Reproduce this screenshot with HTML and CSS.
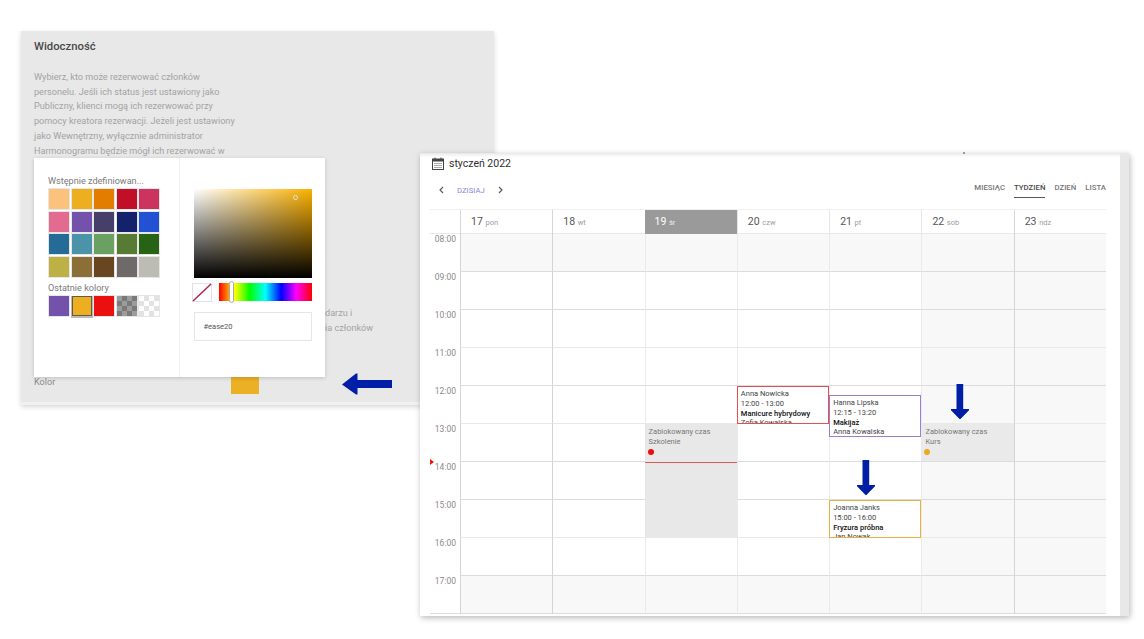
FILE: index.html
```html
<!DOCTYPE html>
<html lang="pl">
<head>
<meta charset="utf-8">
<title>Widoczność i kalendarz</title>
<link rel="stylesheet" href="styles.css">
</head>
<body>
<section class="settings">
  <h2 class="settings-title">Widoczność</h2>
  <p class="settings-text">Wybierz, kto może rezerwować członków<br>personelu. Jeśli ich status jest ustawiony jako<br>Publiczny, klienci mogą ich rezerwować przy<br>pomocy kreatora rezerwacji. Jeżeli jest ustawiony<br>jako Wewnętrzny, wyłącznie administrator<br>Harmonogramu będzie mógł ich rezerwować w</p>
  <p class="settings-tail">darzu i<br>ia członków</p>
  <div class="color-row"><span class="color-label">Kolor</span><span class="color-value"></span></div>
</section>

<div class="picker">
  <div class="picker-left">
    <div class="picker-label">Wstępnie zdefiniowan...</div>
    <div class="swatches">
      <i class="sw s1"></i><i class="sw s2"></i><i class="sw s3"></i><i class="sw s4"></i><i class="sw s5"></i>
      <i class="sw s6"></i><i class="sw s7"></i><i class="sw s8"></i><i class="sw s9"></i><i class="sw s10"></i>
      <i class="sw s11"></i><i class="sw s12"></i><i class="sw s13"></i><i class="sw s14"></i><i class="sw s15"></i>
      <i class="sw s16"></i><i class="sw s17"></i><i class="sw s18"></i><i class="sw s19"></i><i class="sw s20"></i>
    </div>
    <div class="picker-label recent-label">Ostatnie kolory</div>
    <div class="swatches">
      <i class="sw s7"></i><i class="sw s2 selected"></i><i class="sw red"></i><i class="sw check-dark"></i><i class="sw check-light"></i>
    </div>
  </div>
  <div class="picker-right">
    <div class="spectrum"><span class="spectrum-dot"></span></div>
    <div class="hue-row">
      <svg class="no-color" viewBox="0 0 20 19"><rect x="0.5" y="0.5" width="19" height="18" fill="#fff" stroke="#e2e2e2"/><line x1="1" y1="18" x2="19" y2="1" stroke="#a8234f" stroke-width="1.4"/></svg>
      <div class="hue"><span class="hue-thumb"></span></div>
    </div>
    <div class="hex">#ease20</div>
  </div>
</div>

<section class="calendar">
  <div class="cal-title">
    <svg class="cal-icon" viewBox="0 0 12 13"><path d="M3 0.5v2.5M9 0.5v2.5" stroke="#444" fill="none"/><rect x="0.5" y="2" width="11" height="10.5" fill="none" stroke="#444"/><rect x="0.5" y="2" width="11" height="2.5" fill="#444"/><path d="M2.5 6.5h7M2.5 8.5h7M2.5 10.5h7" stroke="#555" stroke-dasharray="1 1" fill="none"/></svg>
    <span>styczeń 2022</span>
  </div>
  <div class="cal-tools">
    <div class="cal-nav">
      <svg class="chev" viewBox="0 0 5 8"><path d="M4 1L1 4l3 3" fill="none" stroke="#555" stroke-width="1.1"/></svg>
      <span class="today-link">DZISIAJ</span>
      <svg class="chev" viewBox="0 0 5 8"><path d="M1 1l3 3-3 3" fill="none" stroke="#555" stroke-width="1.1"/></svg>
    </div>
    <nav class="cal-views">
      <span>MIESIĄC</span><span class="active">TYDZIEŃ</span><span>DZIEŃ</span><span>LISTA</span>
    </nav>
  </div>

  <div class="cal-head">
    <div></div>
    <div class="day dark">17 <small>pon</small></div>
    <div class="day dark">18 <small>wt</small></div>
    <div class="day today">19 <small>śr</small></div>
    <div class="day">20 <small>czw</small></div>
    <div class="day">21 <small>pt</small></div>
    <div class="day">22 <small>sob</small></div>
    <div class="day dark">23 <small>ndz</small></div>
  </div>

  <div class="cal-stack">
    <div class="cal-cells">
      <div class="t">08:00</div><div class="c g dark"></div><div class="c g dark"></div><div class="c g"></div><div class="c g"></div><div class="c g"></div><div class="c g"></div><div class="c g dark"></div>
      <div class="t">09:00</div><div class="c dark"></div><div class="c dark"></div><div class="c"></div><div class="c"></div><div class="c"></div><div class="c g"></div><div class="c g dark"></div>
      <div class="t">10:00</div><div class="c soft dark"></div><div class="c soft dark"></div><div class="c soft"></div><div class="c soft"></div><div class="c soft"></div><div class="c soft g"></div><div class="c soft g dark"></div>
      <div class="t">11:00</div><div class="c dark"></div><div class="c dark"></div><div class="c"></div><div class="c"></div><div class="c"></div><div class="c g"></div><div class="c g dark"></div>
      <div class="t">12:00</div><div class="c soft dark"></div><div class="c soft dark"></div><div class="c soft"></div><div class="c soft"></div><div class="c soft"></div><div class="c soft g"></div><div class="c soft g dark"></div>
      <div class="t">13:00</div><div class="c dark"></div><div class="c dark"></div><div class="c"></div><div class="c"></div><div class="c"></div><div class="c g"></div><div class="c g dark"></div>
      <div class="t">14:00</div><div class="c dark"></div><div class="c dark"></div><div class="c"></div><div class="c"></div><div class="c"></div><div class="c g"></div><div class="c g dark"></div>
      <div class="t">15:00</div><div class="c soft dark"></div><div class="c soft dark"></div><div class="c soft"></div><div class="c soft"></div><div class="c soft"></div><div class="c soft g"></div><div class="c soft g dark"></div>
      <div class="t">16:00</div><div class="c dark"></div><div class="c dark"></div><div class="c"></div><div class="c"></div><div class="c"></div><div class="c g"></div><div class="c g dark"></div>
      <div class="t last">17:00</div><div class="c g dark"></div><div class="c g dark"></div><div class="c g"></div><div class="c g"></div><div class="c g"></div><div class="c g"></div><div class="c g dark"></div>
    </div>
    <div class="cal-events">
      <div class="block block-wed"><div>Zablokowany czas</div><div>Szkolenie</div><span class="dot dot-red"></span></div>
      <div class="block block-sat"><div>Zablokowany czas</div><div>Kurs</div><span class="dot dot-amber"></span></div>
      <div class="now-line"></div>
      <div class="now-mark"></div>
      <div class="ev ev-anna"><div>Anna Nowicka</div><div>12:00 - 13:00</div><b>Manicure hybrydowy</b><div>Zofia Kowalska</div></div>
      <div class="ev ev-hanna"><div>Hanna Lipska</div><div>12:15 - 13:20</div><b>Makijaż</b><div>Anna Kowalska</div></div>
      <div class="ev ev-joanna"><div>Joanna Janks</div><div>15:00 - 16:00</div><b>Fryzura próbna</b><div>Jan Nowak</div></div>
    </div>
  </div>
</section>

<svg class="arrow arrow-left" viewBox="0 0 50 22"><path d="M0 11.5L14 0.5h1.5v6.500H50v8H15.500v6.500H14z" fill="#001fa6"/></svg>
<svg class="arrow arrow-down-a" viewBox="0 0 18 35"><path d="M5.500 0h6.700v25H18v1.200L9 35.500 0 26.200V25h5.500z" fill="#001fa6"/></svg>
<svg class="arrow arrow-down-b" viewBox="0 0 18 35"><path d="M5.500 0h6.700v25H18v1.200L9 35.500 0 26.200V25h5.500z" fill="#001fa6"/></svg>
</body>
</html>
```

FILE: styles.css
```css
* { box-sizing: border-box; }
html, body { margin: 0; padding: 0; }
body {
  position: relative;
  width: 1144px;
  height: 639px;
  overflow: hidden;
  background: #fff;
  font-family: Roboto, "Liberation Sans", sans-serif;
}

/* Back window */
.settings {
  position: absolute;
  left: 21px;
  top: 31px;
  width: 473px;
  height: 374px;
  padding: 9px 13px 0;
  background: #e8e8e8;
  border-bottom: 3px solid #f1f1f1;
  box-shadow: 0 2px 5px rgba(0, 0, 0, .16);
}
.settings-title {
  margin: 0;
  font-size: 11.300px;
  line-height: 14px;
  font-weight: 500;
  color: #484848;
}
.settings-text {
  margin: 16px 0 0;
  font-size: 9.150px;
  line-height: 14.700px;
  color: #a3a3a3;
  white-space: nowrap;
}
.settings-tail {
  margin: 148px 0 0 291px;
  font-size: 9.150px;
  line-height: 14.700px;
  color: #a3a3a3;
}
.color-row {
  display: flex;
  align-items: center;
  height: 24px;
  margin-top: 34px;
}
.color-label { width: 197px; font-size: 9.100px; color: #8b8b8b; }
.color-value { width: 28px; height: 24px; background: #ecb024; }

/* Colour picker */
.picker {
  position: absolute;
  left: 34px;
  top: 158px;
  width: 291px;
  height: 219px;
  display: flex;
  background: #fff;
  box-shadow: 0 1px 4px rgba(0, 0, 0, .18);
}
.picker-left {
  width: 146px;
  padding: 17px 0 0 15px;
  border-right: 1px solid #f0f0f0;
}
.picker-label {
  margin-left: -1px;
  height: 14px;
  font-size: 9.100px;
  line-height: 13px;
  color: #7a7a7a;
  white-space: nowrap;
}
.recent-label { margin-top: 5px; }
.swatches {
  display: grid;
  grid-template-columns: repeat(5, 20px);
  gap: 2.600px;
}
.sw { display: block; height: 20px; box-shadow: 0 0 0 1px #e6e6e6; }
.s1 { background: #fbc27c; } .s2 { background: #edae20; } .s3 { background: #e27d00; }
.s4 { background: #c10f27; } .s5 { background: #cc345f; } .s6 { background: #e36b8f; }
.s7 { background: #7451ab; } .s8 { background: #463f69; } .s9 { background: #14216b; }
.s10 { background: #2251d3; } .s11 { background: #246b98; } .s12 { background: #4b93a9; }
.s13 { background: #6ba063; } .s14 { background: #577b33; } .s15 { background: #266315; }
.s16 { background: #bdb045; } .s17 { background: #8c6f36; } .s18 { background: #674620; }
.s19 { background: #6e6a69; } .s20 { background: #bcbbb4; }
.red { background: #eb1010; }
.selected { border: 1px solid #5d5a52; box-shadow: 0 1px 0 1px #bbb; }
.check-dark {
  background: repeating-conic-gradient(#7a7a7a 0 25%, #9c9c9c 0 50%) 0 0 / 10px 10px;
}
.check-light {
  background: repeating-conic-gradient(#e2e2e2 0 25%, #fff 0 50%) 0 0 / 10px 10px;
}
.picker-right { flex: 1; padding: 31px 0 0 13.500px; }
.spectrum {
  position: relative;
  width: 118px;
  height: 89px;
  background:
    linear-gradient(to bottom, rgba(0, 0, 0, 0), #000),
    linear-gradient(to right, #fff, #fbb000);
}
.spectrum-dot {
  position: absolute;
  left: 99px;
  top: 6px;
  width: 5px;
  height: 5px;
  border: 1px solid #e6e2d0;
  border-radius: 50%;
}
.hue-row { display: flex; gap: 7px; margin: 5px 0 0 -2px; }
.no-color { display: block; width: 20px; height: 19px; }
.hue {
  position: relative;
  width: 93px;
  height: 18px;
  background: linear-gradient(to right, #f00, #ff0 17%, #0f0 33%, #0ff 50%, #00f 67%, #f0f 83%, #f00);
}
.hue-thumb {
  position: absolute;
  left: 10px;
  top: -2px;
  width: 5px;
  height: 22px;
  background: #fff;
  border: 1px solid #aaa;
  border-radius: 3px;
}
.hex {
  width: 118px;
  height: 29px;
  margin-top: 10px;
  padding-left: 9px;
  border: 1px solid #e6e6e6;
  font-size: 7.500px;
  line-height: 27px;
  color: #555;
}

/* Calendar window */
.calendar {
  position: absolute;
  left: 420px;
  top: 153px;
  width: 709px;
  height: 463px;
  padding: 4px 14px 0 10px;
  background: #fff;
  border-right: 9px solid #e8e8e8;
  box-shadow: 1px 2px 6px rgba(0, 0, 0, .28), inset 0 5px 4px -4px rgba(0, 0, 0, .14);
}
.calendar::before {
  content: "";
  position: absolute;
  left: 543px;
  top: -1px;
  width: 2px;
  height: 2px;
  background: #999;
}
.cal-title {
  display: flex;
  align-items: center;
  gap: 5px;
  height: 13px;
  padding-left: 2px;
  font-size: 10.500px;
  color: #2f2f2f;
}
.cal-icon { display: block; width: 12px; height: 13px; }
.cal-tools {
  display: flex;
  justify-content: space-between;
  align-items: flex-start;
  height: 39px;
  padding-top: 12px;
}
.cal-nav {
  display: flex;
  align-items: center;
  gap: 13px;
  height: 16px;
  padding-left: 9px;
  font-size: 7.700px;
}
.chev { display: block; width: 5px; height: 8px; }
.today-link { color: #7f8ad6; }
.cal-views { display: flex; gap: 9px; font-size: 7.800px; font-weight: 500; color: #777; }
.cal-views span { height: 16px; line-height: 9px; padding-top: 1px; }
.cal-views .active { color: #4a4a4a; border-bottom: 1px solid #5a5a5a; }

/* Calendar grid */
.cal-head, .cal-cells, .cal-events {
  display: grid;
  grid-template-columns: 30px repeat(7, 1fr);
  width: 676px;
}
.cal-head {
  height: 25px;
  border-top: 1px solid #efefef;
  border-bottom: 1px solid #e9e9e9;
}
.day {
  padding-left: 10px;
  border-left: 1px solid #e6e6e6;
  font-size: 10.500px;
  line-height: 23px;
  color: #565656;
}
.day.dark { border-left-color: #d6d6d6; }
.day small { font-size: 7.500px; color: #9c9c9c; }
.day.today { background: #9a9a9a; color: #fff; border-left: 0; }
.day.today small { color: #eee; }
.cal-stack { display: grid; }
.cal-cells, .cal-events {
  grid-area: 1 / 1;
  grid-template-rows: repeat(10, 38px);
}
.t {
  padding: 0 4px 0 0;
  text-align: right;
  font-size: 8.500px;
  line-height: 11px;
  color: #8a8a8a;
}
.t.last { border-bottom: 1px solid #dcdcdc; }
.c { border-left: 1px solid #eaeaea; border-bottom: 1px solid #dcdcdc; }
.c.dark { border-left-color: #d4d4d4; }
.c.soft { border-bottom-color: #e9e9e9; }
.c.g { background: #f8f8f8; }

.block {
  grid-column: 4;
  padding: 3px 4px 0;
  background: #e8e8e8;
  font-size: 7.500px;
  line-height: 10px;
  color: #777;
}
.block-wed { grid-row: 6 / span 3; margin-bottom: 1px; }
.block-sat { grid-column: 7; grid-row: 6; margin-bottom: 1px; background: #eaeaea; }
.dot { display: block; width: 6px; height: 6px; margin: 2px 0 0 -1px; border-radius: 50%; }
.dot-red { background: #ee0d0d; }
.dot-amber { background: #efa920; }
.now-line {
  grid-column: 4;
  grid-row: 7;
  align-self: start;
  height: 1px;
  background: #e05a5a;
}
.now-mark {
  grid-column: 1;
  grid-row: 7;
  align-self: start;
  width: 0;
  height: 0;
  margin-top: -3px;
  border-left: 4px solid #f01414;
  border-top: 3px solid transparent;
  border-bottom: 3px solid transparent;
}
.ev {
  align-self: start;
  overflow: hidden;
  padding: 2px 0 0 3px;
  background: #fff;
  font-size: 7.500px;
  line-height: 9.800px;
  color: #444;
}
.ev b { display: block; font-weight: 500; color: #111; }
.ev-anna { grid-column: 5; grid-row: 5; height: 38px; border: 1px solid #e25050; }
.ev-hanna { grid-column: 6; grid-row: 5; height: 42px; margin-top: 9px; border: 1px solid #9b7fcb; }
.ev-joanna { grid-column: 6; grid-row: 8; height: 38px; border: 1px solid #eab040; }

/* Annotation arrows */
.arrow { position: absolute; display: block; }
.arrow-left { left: 342px; top: 373px; width: 50px; height: 22px; }
.arrow-down-a { left: 951px; top: 384px; width: 18px; height: 35px; }
.arrow-down-b { left: 857px; top: 460px; width: 18px; height: 35px; }
```
